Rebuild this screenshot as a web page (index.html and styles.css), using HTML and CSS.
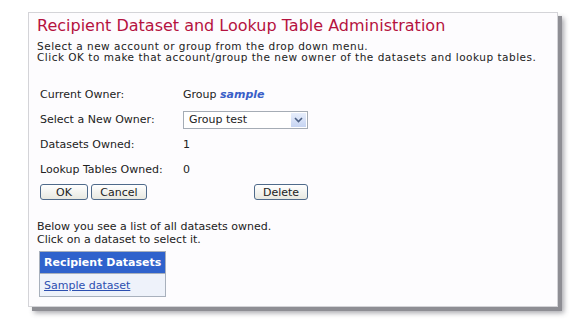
FILE: index.html
```html
<!DOCTYPE html>
<html lang="en"><head>
    <meta charset="utf-8">
    <title>Recipient Dataset and Lookup Table Administration</title>
    <link rel="stylesheet" href="styles.css">
</head>
<body>
    <div class="panel">
        <h1 class="title">Recipient Dataset and Lookup Table Administration</h1>
        <div class="intro">
            <div>Select a new account or group from the drop down menu.</div>
            <div>Click OK to make that account/group the new owner of the datasets and lookup tables.</div>
        </div>

        <form class="owner-form">
            <div class="row">
                <span class="label">Current Owner:</span>
                <span class="value">Group <b class="owner-name">sample</b></span>
            </div>
            <div class="row">
                <span class="label">Select a New Owner:</span>
                <span class="select">
                    <span class="select-text">Group test</span>
                    <span class="select-arrow">
                        <svg width="9" height="6" viewBox="0 0 9 6"><path d="M1 1 L4.5 4.5 L8 1" fill="none" stroke="#4d6185" stroke-width="1.6"/></svg>
                    </span>
                </span>
            </div>
            <div class="row">
                <span class="label">Datasets Owned:</span>
                <span class="value">1</span>
            </div>
            <div class="row">
                <span class="label">Lookup Tables Owned:</span>
                <span class="value">0</span>
            </div>
            <div class="buttons">
                <button type="button" class="btn btn-ok">OK</button>
                <button type="button" class="btn btn-cancel">Cancel</button>
                <button type="button" class="btn btn-delete">Delete</button>
            </div>
        </form>

        <div class="below">
            <div>Below you see a list of all datasets owned.</div>
            <div>Click on a dataset to select it.</div>
        </div>

        <table class="datasets">
            <tr><th>Recipient Datasets</th></tr>
            <tr><td><a href="#">Sample dataset</a></td></tr>
        </table>
    </div>
</body></html>
```

FILE: styles.css
```css
html {
    height: 100%;
}

body {
    margin: 0;
    min-height: 100%;
    box-sizing: border-box;
    padding: 12px 0 25px 28px;
    background-color: #ffffff;
    font-family: "DejaVu Sans", Verdana, sans-serif;
    font-size: 11px;
    color: #222222;
}

.panel {
    width: 520px;
    height: 293px;
    padding: 0 0 0 8px;
    background-color: #fdfcfe;
    border: 1px solid #d4d4d8;
    box-shadow: 4px 4px 0 #8e8e94, 6px 6px 5px rgba(60, 60, 70, 0.45);
}

.title {
    margin: 3px 0 0 0;
    font-size: 16px;
    font-weight: normal;
    color: #b5123f;
    line-height: 20px;
}

.intro {
    margin: 5px 0 0 0;
    font-size: 10.5px;
    line-height: 11px;
    letter-spacing: 0.5px;
}

.owner-form {
    margin: 19px 0 0 3px;
    width: 268px;
}

.row {
    display: flex;
    align-items: center;
    height: 25px;
}

.label {
    width: 143px;
}

.owner-name {
    color: #3a5fc8;
    font-style: italic;
}

.select {
    display: flex;
    align-items: center;
    justify-content: space-between;
    width: 125px;
    height: 18px;
    border: 1px solid #a5acb5;
    background: #ffffff;
    padding-left: 5px;
    box-sizing: border-box;
}

.select-arrow {
    display: flex;
    align-items: center;
    justify-content: center;
    width: 15px;
    height: 14px;
    margin-right: 1px;
    background: linear-gradient(#e7eefc, #c6d4f2);
}

.buttons {
    display: flex;
    align-items: center;
    margin-top: 2px;
    gap: 3px;
}

.btn {
    font-family: "DejaVu Sans", Verdana, sans-serif;
    font-size: 11px;
    color: #222222;
    height: 16px;
    padding: 0;
    border: 1px solid #4f6a8a;
    border-radius: 3px;
    background: linear-gradient(#ffffff, #e8e8e0);
}

.btn-ok {
    width: 48px;
}

.btn-cancel {
    width: 56px;
}

.btn-delete {
    width: 54px;
    margin-left: auto;
}

.below {
    margin: 20px 0 0 0;
    line-height: 13px;
}

.datasets {
    margin: 5px 0 0 2px;
    border-collapse: collapse;
    border: 1px solid #a8b0bc;
}

.datasets th {
    background-color: #2f62cc;
    color: #ffffff;
    text-align: left;
    padding: 0 4px;
    height: 21px;
    border-bottom: 1px solid #a8b0bc;
}

.datasets td {
    background-color: #eef2fa;
    padding: 0 4px;
    height: 22px;
}

.datasets a {
    color: #2d4fb0;
}
```
